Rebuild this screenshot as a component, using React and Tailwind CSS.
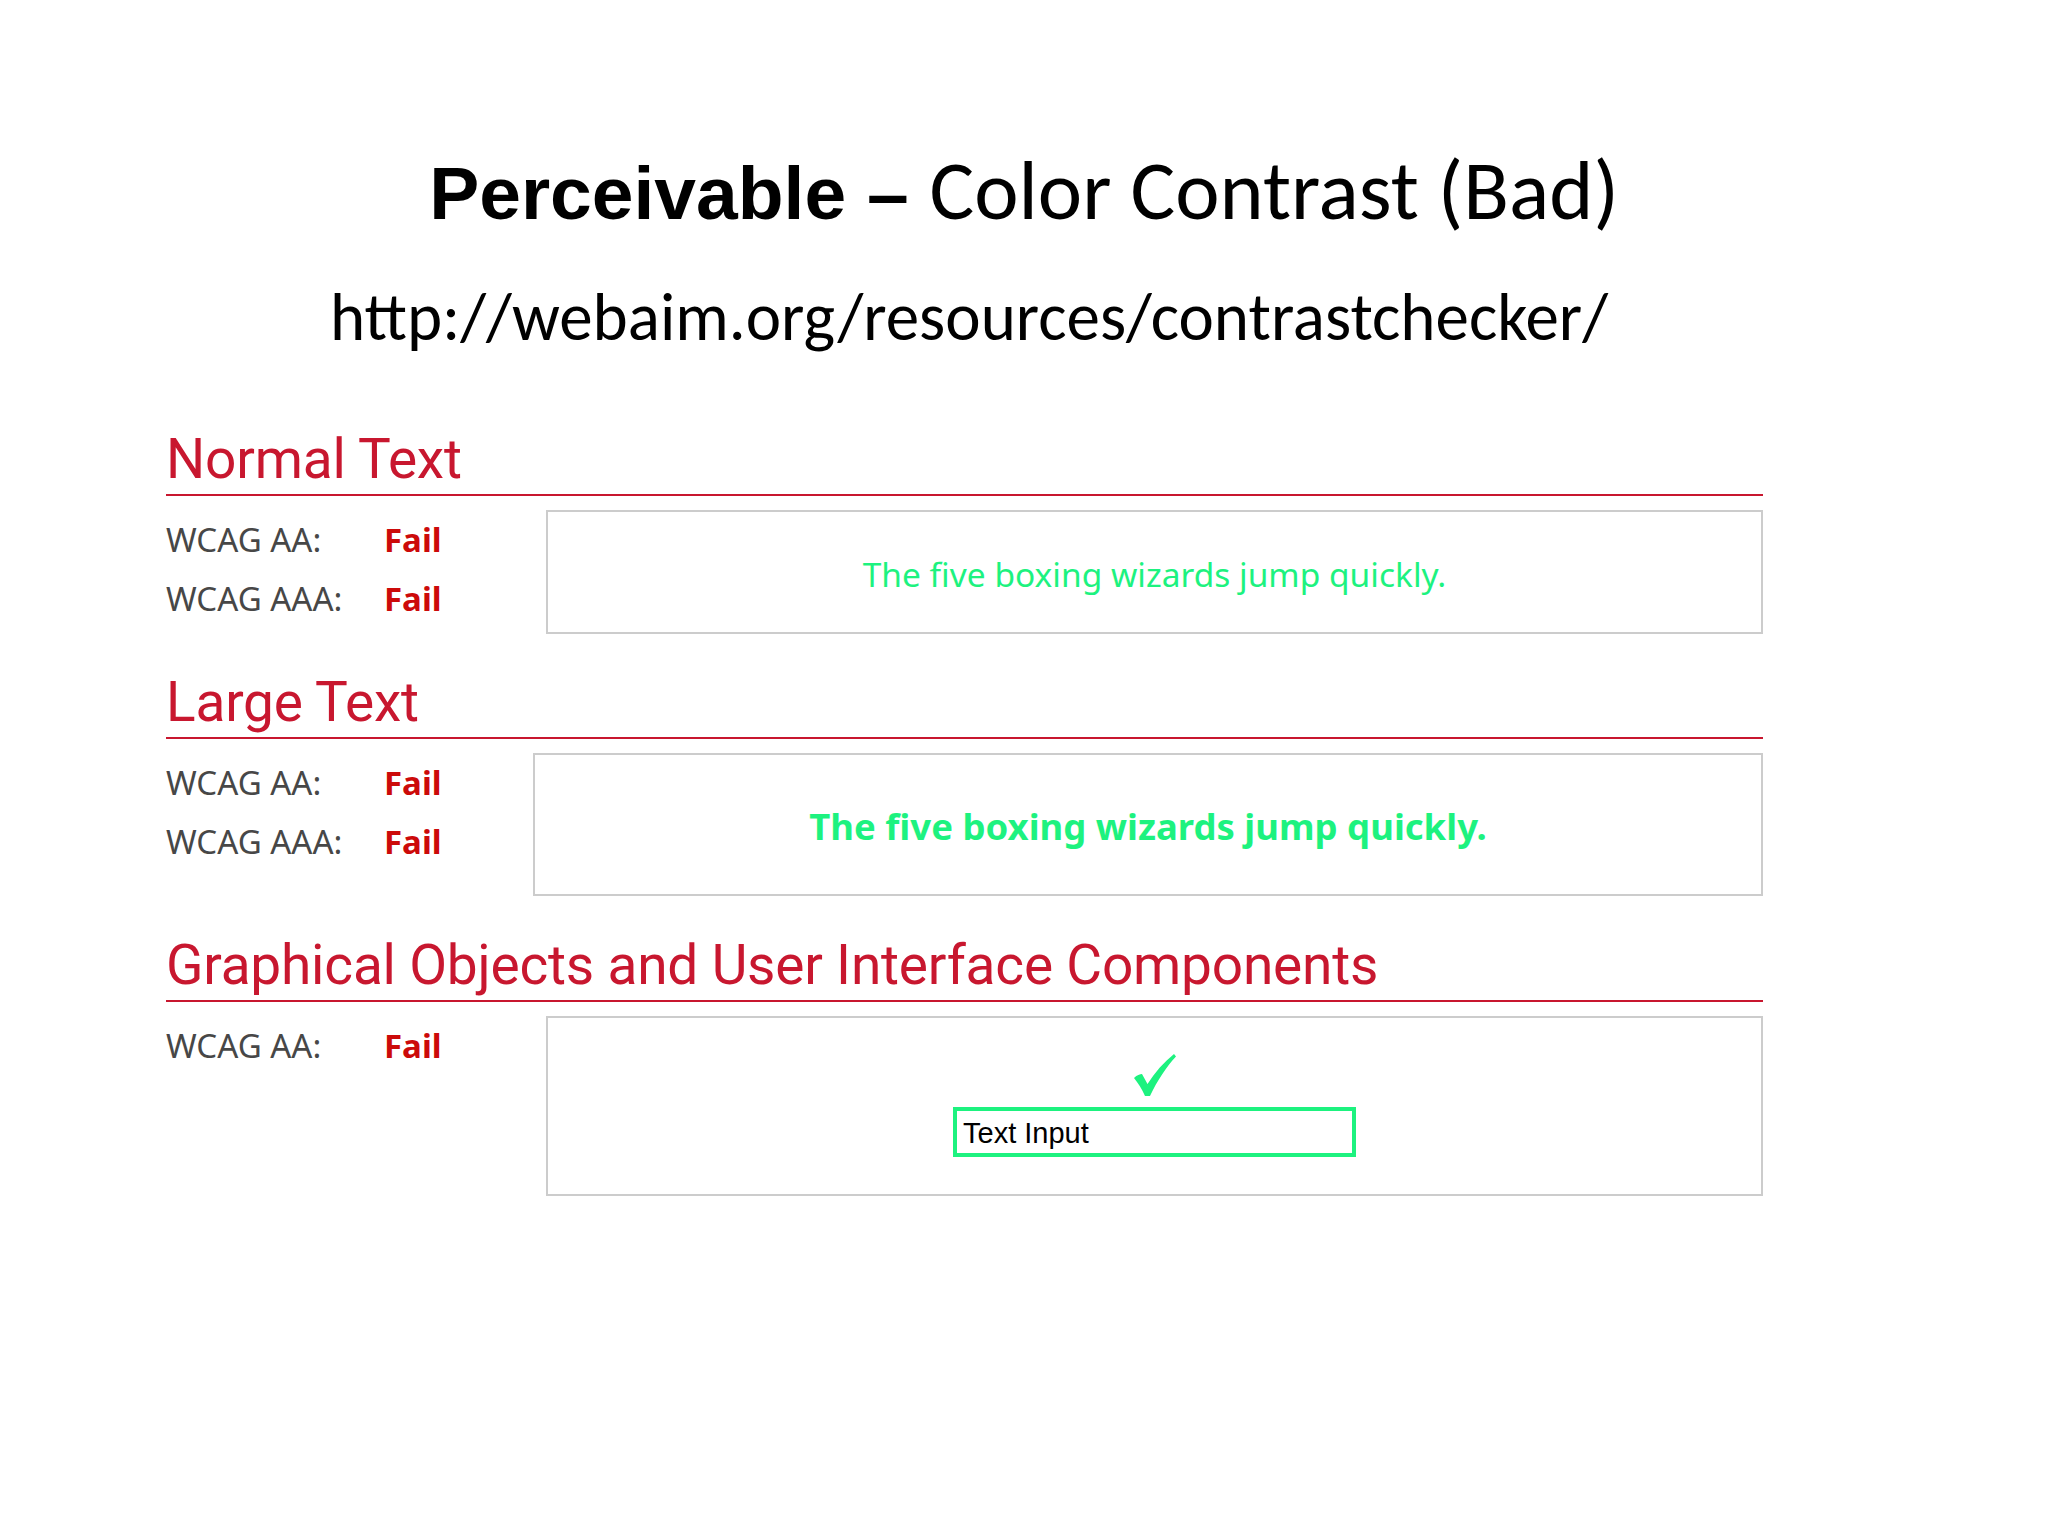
import React from 'react';

const Check = () => (
  <svg width="42" height="42" viewBox="0 0 42 42" className="block">
    <path
      d="M0 24 C3 21 6 20 8 20 L13.5 30 C21 18 30 8 40 0 L42 2.5 C33 12 23 27 16 42 L11 42 C8 35 4 29 0 24 Z"
      fill="#1df27f"
    />
  </svg>
);

const Section = ({ title, rows, boxClass, children, className = '' }) => (
  <div className={className}>
    {/* Heading + red rule */}
    <h2 className="text-[55px] leading-[54px] text-[#c8172f] font-['Roboto',sans-serif] tracking-[-0.2px]">
      {title}
    </h2>
    <div className="mt-[8px] h-[2px] bg-[#c8172f]" />

    <div className="flex items-start mt-[14px]">
      <div className="w-[380px] shrink-0">
        {rows.map((r) => (
          <div key={r} className="flex text-[33px] leading-[59px] font-['Noto_Sans',sans-serif]">
            <span className="w-[218px] text-[#474747]">{r}</span>
            <span className="font-bold text-[#cc0a0a]">Fail</span>
          </div>
        ))}
      </div>
      <div className={`flex-1 border-2 border-[#cccccc] bg-white ${boxClass}`}>
        {children}
      </div>
    </div>
  </div>
);

export default function App() {
  return (
    <div className="w-[2048px] h-[1536px] bg-white overflow-hidden">
      {/* Slide title */}
      <h1 className="pt-[153px] h-[233px] flex items-baseline justify-center whitespace-nowrap">
        <span className="font-['Liberation_Sans',Arial,sans-serif] font-bold text-[75px] leading-[75px] text-black">
          Perceivable –&nbsp;
        </span>
        <span className="font-['Carlito','Lato',sans-serif] text-[84px] leading-[75px] text-black">
          Color Contrast (Bad)
        </span>
      </h1>

      <p className="mt-[52px] pl-[330px] text-[67px] leading-[64px] text-black font-['Carlito','Lato',sans-serif]">
        http://webaim.org/resources/contrastchecker/
      </p>

      {/* Embedded checker results */}
      <div className="ml-[166px] w-[1597px] mt-[83px]">
        <Section
          title="Normal Text"
          rows={['WCAG AA:', 'WCAG AAA:']}
          boxClass="h-[124px] flex items-center justify-center"
        >
          <span className="text-[33.5px] text-[#1df27f] font-['Noto_Sans',sans-serif] pt-[4px]">
            The five boxing wizards jump quickly.
          </span>
        </Section>

        <Section
          className="mt-[41px]"
          title="Large Text"
          rows={['WCAG AA:', 'WCAG AAA:']}
          boxClass="h-[143px] -ml-[13px] flex items-center justify-center"
        >
          <span className="text-[36.5px] font-bold text-[#1df27f] font-['Noto_Sans',sans-serif] pt-[4px]">
            The five boxing wizards jump quickly.
          </span>
        </Section>

        <Section
          className="mt-[42px]"
          title="Graphical Objects and User Interface Components"
          rows={['WCAG AA:']}
          boxClass="h-[180px] flex flex-col items-center pt-[36px]"
        >
          <Check />
          <div className="mt-[11px] w-[403px] h-[50px] border-4 border-[#1df27f] bg-white pl-[6px] pt-[1px] text-[29px] leading-[42px] text-black font-['Liberation_Sans',Arial,sans-serif]">
            Text Input
          </div>
        </Section>
      </div>
    </div>
  );
}
